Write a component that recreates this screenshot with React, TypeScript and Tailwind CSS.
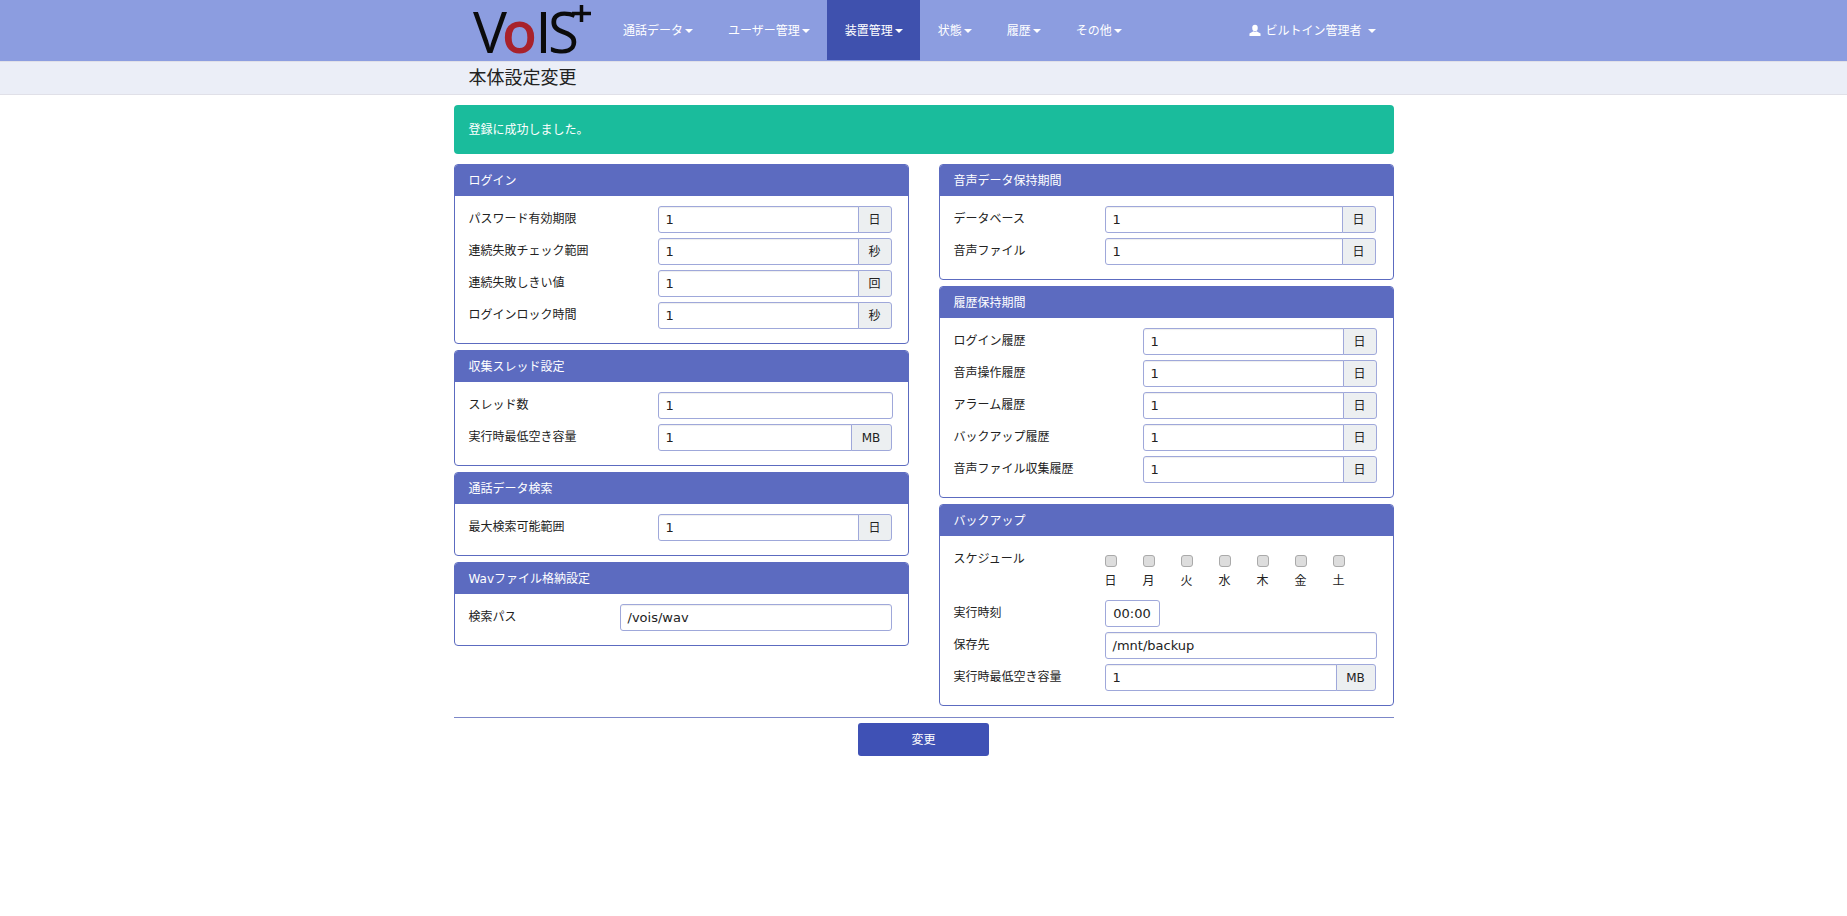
const FONT = "font-['DejaVu_Sans','Noto_Sans_CJK_JP',sans-serif]";

const NAV_ITEMS = [
  { label: "通話データ", active: false },
  { label: "ユーザー管理", active: false },
  { label: "装置管理", active: true },
  { label: "状態", active: false },
  { label: "履歴", active: false },
  { label: "その他", active: false },
];

const DAYS = ["日", "月", "火", "水", "木", "金", "土"];

function Caret({ className = "ml-[2px]" }: { className?: string }) {
  return (
    <span
      className={`inline-block h-0 w-0 border-x-[4px] border-t-[4px] border-x-transparent border-t-white ${className}`}
    />
  );
}

function Logo() {
  return (
    <svg width="120" height="60" viewBox="0 0 120 60" className="shrink-0">
      <g fontFamily="'Open Sans', sans-serif" fontSize="57">
        <text x="0" y="53" fill="#0b0b0b" textLength="34" lengthAdjust="spacingAndGlyphs">V</text>
        <text x="29" y="53" fill="#a8222b" textLength="35" lengthAdjust="spacingAndGlyphs" fontWeight="600">o</text>
        <text x="62" y="53" fill="#0b0b0b" textLength="17" lengthAdjust="spacingAndGlyphs">I</text>
        <text x="75" y="53" fill="#0b0b0b" textLength="31" lengthAdjust="spacingAndGlyphs">S</text>
      </g>
      <path d="M108.500 5v17M99 13.500h19" stroke="#0b0b0b" strokeWidth="3.500" />
    </svg>
  );
}

function UserGlyph() {
  return (
    <svg width="12" height="13" viewBox="0 0 13 13" className="mr-[4px]" fill="white">
      <ellipse cx="6.500" cy="3.800" rx="3" ry="3.600" />
      <path d="M4.800 7.200 0.500 9.800V12.500H12.500V9.800L8.200 7.200C7.200 8 5.800 8 4.800 7.200Z" />
    </svg>
  );
}

function NumberField({ value = "1", unit, unitWidth = "w-[34px]" }: { value?: string; unit?: string; unitWidth?: string }) {
  return (
    <div className="flex h-[27px] flex-1">
      <div
        className={`flex flex-1 items-center border border-[#9fa8da] bg-white pl-[7px] text-[13px] text-[#222] shadow-[inset_0_1px_1px_rgba(0,0,0,0.07)] ${
          unit ? "rounded-l-[3px]" : "rounded-[3px]"
        }`}
      >
        {value}
      </div>
      {unit && (
        <div
          className={`-ml-px flex ${unitWidth} items-center justify-center rounded-r-[3px] border border-[#9fa8da] bg-[#eceff1] text-[12px] text-[#222]`}
        >
          {unit}
        </div>
      )}
    </div>
  );
}

function Row({
  label,
  labelWidth,
  unit,
  value,
  unitWidth,
  fieldClass = "",
}: {
  label: string;
  labelWidth: string;
  unit?: string;
  value?: string;
  unitWidth?: string;
  fieldClass?: string;
}) {
  return (
    <div className={`flex h-[27px] items-start ${fieldClass}`}>
      <div className={`${labelWidth} shrink-0 text-[12px] leading-[26px] text-[#222]`}>{label}</div>
      <NumberField unit={unit} value={value} unitWidth={unitWidth} />
    </div>
  );
}

function Panel({ title, children }: { title: string; children: React.ReactNode }) {
  return (
    <section className="rounded-[4px] border border-[#5c6bc0] bg-white">
      <h3 className="flex h-[31px] items-center rounded-t-[3px] bg-[#5c6bc0] pl-[14px] text-[12px] font-normal text-white">
        {title}
      </h3>
      <div className="flex flex-col gap-[5px] pr-[16px] pl-[14px] pt-[10px] pb-[14px]">{children}</div>
    </section>
  );
}

export default function App() {
  return (
    <div className={`min-h-[916px] bg-white ${FONT}`}>
      <header className="h-[61px] bg-[#8c9de0]">
        <div className="mx-auto flex h-[60px] w-[940px] items-stretch">
          <div className="flex w-[152px] shrink-0 items-center pl-[19px]">
            <Logo />
          </div>
          <nav className="flex items-stretch">
            {NAV_ITEMS.map((item) => (
              <div
                key={item.label}
                className={`flex items-center px-[17.5px] pt-[1px] text-[12px] text-white ${item.active ? "bg-[#3f51ae]" : ""}`}
              >
                <span>{item.label}</span>
                <Caret />
              </div>
            ))}
          </nav>
          <div className="ml-auto flex items-center pt-[1px] pr-[18px] text-[12px] text-white">
            <UserGlyph />
            <span>ビルトイン管理者</span>
            <Caret className="ml-[6px]" />
          </div>
        </div>
      </header>
      <div className="h-[34px] border-y border-[#e0e0e8] bg-[#ebeef7]">
        <div className="mx-auto w-[940px] pl-[15px] text-[18px] leading-[32px] text-[#222]">本体設定変更</div>
      </div>

      <main className="mx-auto w-[940px] pt-[10px]">
        <div className="flex h-[49px] items-center rounded-[4px] bg-[#1abc9c] pl-[15px] text-[12px] text-white">
          登録に成功しました。
        </div>

        <div className="mt-[10px] grid grid-cols-[455px_455px] justify-between">
          <div className="flex flex-col gap-[6px]">
            <Panel title="ログイン">
              <Row label="パスワード有効期限" labelWidth="w-[189px]" unit="日" />
              <Row label="連続失敗チェック範囲" labelWidth="w-[189px]" unit="秒" />
              <Row label="連続失敗しきい値" labelWidth="w-[189px]" unit="回" />
              <Row label="ログインロック時間" labelWidth="w-[189px]" unit="秒" />
            </Panel>
            <Panel title="収集スレッド設定">
              <Row label="スレッド数" labelWidth="w-[189px]" fieldClass="-mr-px" />
              <Row label="実行時最低空き容量" labelWidth="w-[189px]" unit="MB" unitWidth="w-[41px]" />
            </Panel>
            <Panel title="通話データ検索">
              <Row label="最大検索可能範囲" labelWidth="w-[189px]" unit="日" />
            </Panel>
            <Panel title="Wavファイル格納設定">
              <Row label="検索パス" labelWidth="w-[151px]" value="/vois/wav" />
            </Panel>
          </div>

          <div className="flex flex-col gap-[6px]">
            <Panel title="音声データ保持期間">
              <Row label="データベース" labelWidth="w-[151px]" unit="日" fieldClass="mr-px" />
              <Row label="音声ファイル" labelWidth="w-[151px]" unit="日" fieldClass="mr-px" />
            </Panel>
            <Panel title="履歴保持期間">
              <Row label="ログイン履歴" labelWidth="w-[189px]" unit="日" />
              <Row label="音声操作履歴" labelWidth="w-[189px]" unit="日" />
              <Row label="アラーム履歴" labelWidth="w-[189px]" unit="日" />
              <Row label="バックアップ履歴" labelWidth="w-[189px]" unit="日" />
              <Row label="音声ファイル収集履歴" labelWidth="w-[189px]" unit="日" />
            </Panel>
            <Panel title="バックアップ">
              <div className="flex h-[49px] items-start">
                <div className="w-[151px] shrink-0 text-[12px] leading-[26px] text-[#222]">スケジュール</div>
                <div className="flex gap-[26px] pt-[9px]">
                  {DAYS.map((day) => (
                    <div key={day} className="flex w-[12px] flex-col items-center">
                      <span className="h-[12px] w-[12px] rounded-[3px] border border-[#aaa] bg-[#ddd]" />
                      <span className="mt-[5px] text-[12px] leading-[18px] text-[#222]">{day}</span>
                    </div>
                  ))}
                </div>
              </div>
              <div className="flex h-[27px] items-start">
                <div className="w-[151px] shrink-0 text-[12px] leading-[26px] text-[#222]">実行時刻</div>
                <div className="flex h-[27px] w-[55px] items-center justify-center rounded-[3px] border border-[#9fa8da] text-[13px] text-[#222]">
                  00:00
                </div>
              </div>
              <Row label="保存先" labelWidth="w-[151px]" value="/mnt/backup" />
              <Row label="実行時最低空き容量" labelWidth="w-[151px]" unit="MB" unitWidth="w-[40px]" fieldClass="mr-px" />
            </Panel>
          </div>
        </div>

        <div className="mt-[11px] border-t border-[#7c87c8] pt-[5px]">
          <button className="mx-auto flex h-[33px] w-[131px] items-center justify-center rounded-[3px] bg-[#3f51b5] text-[12px] text-white">
            変更
          </button>
        </div>
      </main>
    </div>
  );
}
